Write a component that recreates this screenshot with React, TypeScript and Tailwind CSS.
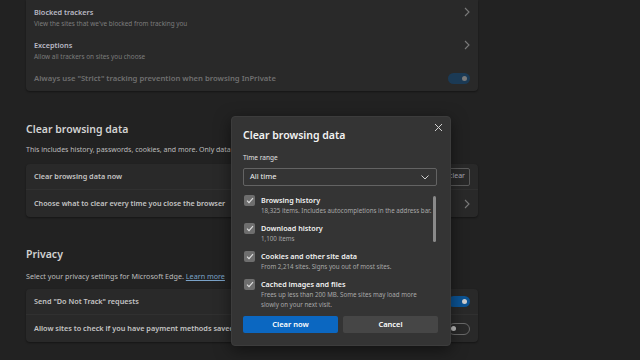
import React from "react";

const font = { fontFamily: '"Noto Sans", "Open Sans", sans-serif' };

function Chevron({ className = "" }: { className?: string }) {
  return (
    <svg width="6" height="10" viewBox="0 0 6 10" className={className}>
      <path d="M1 1l4 4-4 4" fill="none" stroke="#7a7a7a" strokeWidth="1.1" />
    </svg>
  );
}

function Check() {
  return (
    <div className="w-[11px] h-[11px] rounded-[2px] bg-[#6e6e6e] flex items-center justify-center shrink-0">
      <svg width="8" height="7" viewBox="0 0 8 7">
        <path d="M1 3.6l2 2L7 1.2" fill="none" stroke="#e0e0e0" strokeWidth="1.1" />
      </svg>
    </div>
  );
}

function CheckRow({ title, sub }: { title: string; sub: React.ReactNode }) {
  return (
    <div className="flex gap-[6px]">
      <div className="pt-[0px]">
        <Check />
      </div>
      <div className="flex flex-col">
        <div className="text-[7.2px] leading-[11px] font-semibold text-[#f2f2f2] whitespace-nowrap">{title}</div>
        <div className="text-[6.2px] leading-[10px] text-[#a8a8a8] whitespace-nowrap">{sub}</div>
      </div>
    </div>
  );
}

export default function App() {
  return (
    <div className="relative w-[640px] h-[360px] overflow-hidden bg-[#222222]" style={font}>
      <div className="w-[452px] ml-[26px] flex flex-col">
        {/* Top card */}
        <div className="bg-[#292929] rounded-b-[4px] shadow-[0_1px_2px_rgba(0,0,0,0.4)] px-[8px] pt-[6px] pb-[7px] flex flex-col">
          <div className="flex items-start justify-between h-[24px]">
            <div className="flex flex-col">
              <div className="text-[7.3px] leading-[12px] font-semibold text-[#b9b9c4]">Blocked trackers</div>
              <div className="text-[6.4px] leading-[12px] text-[#7c7c7c]">View the sites that we've blocked from tracking you</div>
            </div>
            <Chevron className="mt-[1px]" />
          </div>
          <div className="flex items-start justify-between h-[24px] mt-[9px]">
            <div className="flex flex-col">
              <div className="text-[7.3px] leading-[12px] font-semibold text-[#b9b9c4]">Exceptions</div>
              <div className="text-[6.4px] leading-[12px] text-[#7c7c7c]">Allow all trackers on sites you choose</div>
            </div>
            <Chevron className="mt-[1px]" />
          </div>
          <div className="flex items-center justify-between h-[12px] mt-[9px]">
            <div className="text-[7.7px] leading-[12px] font-semibold text-[#6f6f6f]">Always use "Strict" tracking prevention when browsing InPrivate</div>
            <div className="w-[22px] h-[11px] rounded-full bg-[#1b3a55] flex items-center justify-end pr-[3px]">
              <div className="w-[5px] h-[5px] rounded-full bg-[#7a7a7a]" />
            </div>
          </div>
        </div>

        {/* Clear browsing data section */}
        <div className="mt-[31px] text-[10.5px] leading-[14px] font-semibold text-[#d2d2d2]">Clear browsing data</div>
        <div className="mt-[9px] text-[7px] leading-[10px] text-[#bdbdbd] whitespace-nowrap">
          This includes history, passwords, cookies, and more. Only data from this profile will be deleted.
        </div>
        <div className="mt-[9px] bg-[#292929] rounded-[4px] shadow-[0_1px_2px_rgba(0,0,0,0.4)]">
          <div className="flex items-center justify-between h-[26px] pl-[8px] pr-[8px] border-b border-[#303030]">
            <div className="text-[7.3px] font-semibold text-[#c4c4c4]">Clear browsing data now</div>
            <div className="h-[18px] px-[4px] border border-[#5a5a5a] rounded-[2px] flex items-center text-[7px] text-[#a8a8b4]">Choose what to clear</div>
          </div>
          <div className="flex items-center justify-between h-[27px] px-[8px]">
            <div className="text-[7.2px] font-semibold text-[#c4c4c4]">Choose what to clear every time you close the browser</div>
            <Chevron />
          </div>
        </div>

        {/* Privacy */}
        <div className="mt-[30px] text-[10.5px] leading-[14px] font-semibold text-[#d2d2d2]">Privacy</div>
        <div className="mt-[10px] text-[7.2px] leading-[10px] text-[#bdbdbd]">
          Select your privacy settings for Microsoft Edge.{" "}
          <span className="text-[#7aa2c8] underline">Learn more</span>
        </div>
        <div className="mt-[8px] bg-[#292929] rounded-[4px] shadow-[0_1px_2px_rgba(0,0,0,0.4)]">
          <div className="flex items-center justify-between h-[26px] px-[8px] border-b border-[#303030]">
            <div className="text-[7.3px] font-semibold text-[#c4c4c4]">Send "Do Not Track" requests</div>
            <div className="w-[22px] h-[11px] rounded-full bg-[#0b5394] flex items-center justify-end pr-[3px]">
              <div className="w-[5px] h-[5px] rounded-full bg-[#cfcfcf]" />
            </div>
          </div>
          <div className="flex items-center justify-between h-[27px] px-[8px]">
            <div className="text-[7.3px] font-semibold text-[#c4c4c4]">Allow sites to check if you have payment methods saved</div>
            <div className="w-[22px] h-[12px] rounded-full border border-[#6a6a6a] flex items-center pl-[2px]">
              <div className="w-[5px] h-[5px] rounded-full bg-[#bdbdbd]" />
            </div>
          </div>
        </div>
      </div>

      {/* Dialog */}
      <div className="absolute left-[231px] top-[116px] w-[220px] h-[230px] bg-[#343434] rounded-[4px] border border-[#3c3c3c] shadow-[0_4px_16px_rgba(0,0,0,0.5)] pl-[11px] pr-[13px] pt-[11px] flex flex-col">
        <div className="absolute right-[7px] top-[6px]">
          <svg width="9" height="9" viewBox="0 0 9 9">
            <path d="M1 1l7 7M8 1L1 8" stroke="#d0d0d0" strokeWidth="1" />
          </svg>
        </div>
        <div className="text-[10.5px] leading-[14px] font-semibold text-[#f2f2f2]">Clear browsing data</div>
        <div className="mt-[11px] text-[6.5px] leading-[10px] text-[#e0e0e0]">Time range</div>
        <div className="mt-[5px] h-[18px] border border-[#636363] rounded-[2px] flex items-center justify-between pl-[6px] pr-[7px]">
          <span className="text-[7.5px] text-[#f0f0f0]">All time</span>
          <svg width="8" height="5" viewBox="0 0 8 5">
            <path d="M0.5 0.5L4 4l3.5-3.5" fill="none" stroke="#cfcfcf" strokeWidth="1" />
          </svg>
        </div>
        <div className="mt-[9px] flex justify-between">
          <div className="flex flex-col gap-[7px] pl-[1px]">
            <CheckRow title="Browsing history" sub="18,325 items. Includes autocompletions in the address bar." />
            <CheckRow title="Download history" sub="1,100 items" />
            <CheckRow title="Cookies and other site data" sub="From 2,214 sites. Signs you out of most sites." />
            <CheckRow
              title="Cached images and files"
              sub={<>Frees up less than 200 MB. Some sites may load more<br />slowly on your next visit.</>}
            />
          </div>
          <div className="w-[3px] h-[46px] mt-[1px] mr-[1px] rounded-full bg-[#8a8a8a]" />
        </div>
        <div className="mt-[6px] flex gap-[5px] mr-[-1px]">
          <div className="flex-1 h-[17px] rounded-[2px] bg-[#0b67c1] flex items-center justify-center text-[7.5px] font-semibold text-white">Clear now</div>
          <div className="flex-1 h-[17px] rounded-[2px] bg-[#464646] flex items-center justify-center text-[7.5px] font-semibold text-white">Cancel</div>
        </div>
      </div>
    </div>
  );
}
